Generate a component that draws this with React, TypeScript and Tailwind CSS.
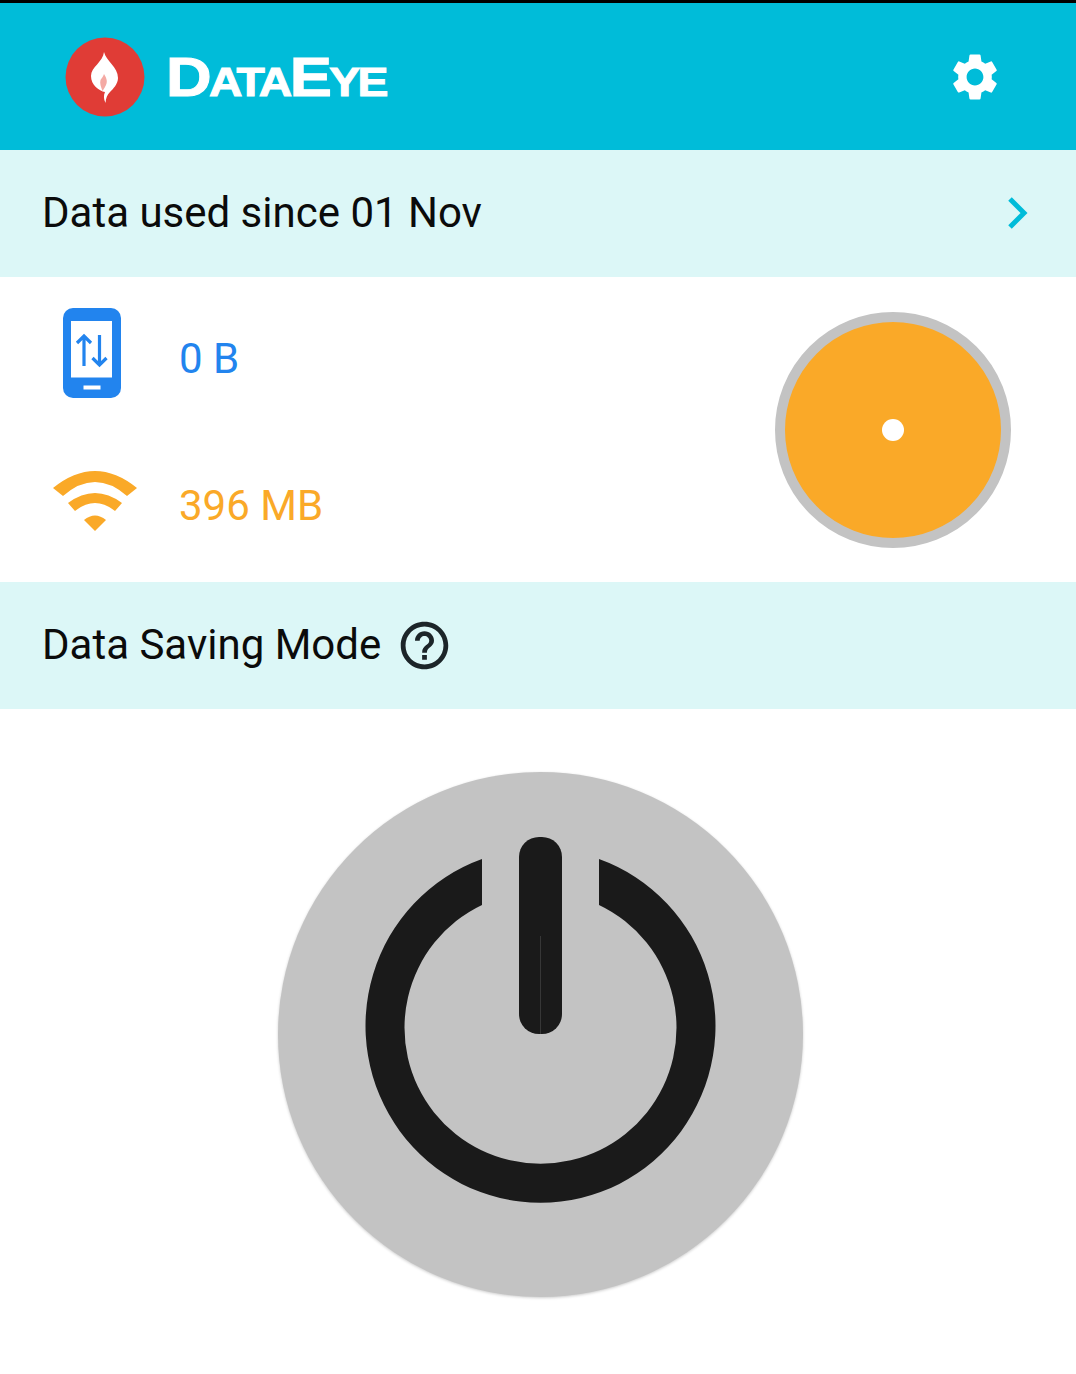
import { MdSettings, MdHelpOutline } from "react-icons/md";

function Flame() {
  return (
    <svg viewBox="0 0 80 80" className="h-[80px] w-[80px]">
      <circle cx="40" cy="40" r="39.5" fill="#e03c36" />
      <path
        d="M39 15 C41 24 53 30 53 41 C53 47 48 52 45 55 C42 58 41 61 40.500 66 C38.500 62 38.500 58 40 55 C34 54 26 48 26 39 C26 30 38 25 39 15 Z"
        fill="#ffffff"
      />
      <path d="M39 37 C41 40 43 44 41 48 C40 50 39 52 37.500 54 C36 50 34.500 46 35.500 43 C36.500 41 38 40 39 37 Z" fill="#f4aaa4" />
    </svg>
  );
}

function PhoneData() {
  return (
    <svg viewBox="0 0 58 90" className="h-[90px] w-[58px]">
      <rect x="0" y="0" width="58" height="90" rx="10" fill="#2284ee" />
      <rect x="8" y="13" width="41" height="56.500" fill="#ffffff" />
      <rect x="20.500" y="77.500" width="17" height="4" fill="#ffffff" />
      <path
        d="M21 58 V28 M14 35 L21 28 L28 35 M36.500 27 V57 M29.500 50 L36.500 57 L43.500 50"
        fill="none"
        stroke="#2284ee"
        strokeWidth="3.2"
      />
    </svg>
  );
}

function Wifi() {
  return (
    <svg viewBox="0 0 84 60" className="h-[60px] w-[84px]" fill="#faa928">
      <path d="M0 17 Q42 -17 84 17 L74 25 Q42 -3 10 25 Z" />
      <path d="M15 32 Q42 12 69 32 L62 40 Q42 24 22 40 Z" />
      <path d="M31 49 Q42 40 53 49 L42 60 Z" />
    </svg>
  );
}

function PowerGlyph() {
  return (
    <svg viewBox="0 0 351 366" className="h-[366px] w-[351px]">
      {/* ring ends are cut vertically, so this is a filled shape and not a stroke */}
      <path
        d="M117 22 A175 177 0 1 0 234 22 V68 A136 136 0 1 1 117 68 Z"
        fill="#1a1a1a"
      />
      <rect x="154" y="0" width="43" height="197" rx="20" fill="#1a1a1a" />
      <line x1="175.500" y1="99" x2="175.500" y2="197" stroke="#555555" strokeWidth="0.5" />
    </svg>
  );
}

export default function App() {
  return (
    <div
      className="flex h-[1374px] w-[1076px] flex-col overflow-hidden bg-white"
      style={{ fontFamily: "Roboto, sans-serif" }}
    >
      <div className="h-[3px] bg-black" />

      <header className="flex h-[147px] items-center justify-between bg-[#00bcd9] pl-[65px] pr-[73px]">
        <div className="flex items-center gap-[21px]">
          <Flame />
          <div
            className="flex origin-left scale-x-[1.13] items-baseline font-bold leading-none tracking-[-2.3px] text-white [-webkit-text-stroke:1px_white]"
            style={{ fontFamily: "'Liberation Sans', sans-serif" }}
          >
            <span className="text-[56px]">D</span>
            <span className="text-[41px]">ATA</span>
            <span className="text-[56px]">E</span>
            <span className="text-[41px]">YE</span>
          </div>
        </div>
        <MdSettings className="text-white" size={56} />
      </header>

      <section className="flex h-[127px] items-center justify-between bg-[#dcf7f7] pb-[1px] pl-[42px] pr-[48px]">
        <span className="mb-[1px] text-[42px] leading-none text-[#0b0b0b]">Data used since 01 Nov</span>
        <svg viewBox="0 0 20 32" className="h-[32px] w-[20px]">
          <path d="M2 2 L16 16 L2 30" fill="none" stroke="#00bcd9" strokeWidth="5" />
        </svg>
      </section>

      <section className="flex h-[305px] justify-between pl-[53px] pr-[65px] pt-[31px]">
        <div className="flex flex-col">
          <div className="flex h-[90px] items-center">
            <div className="w-[84px] pl-[10px]">
              <PhoneData />
            </div>
            <span className="ml-[42px] mt-[12px] text-[42px] leading-none text-[#2284ee]">0 B</span>
          </div>
          <div className="mt-[73px] flex h-[60px] items-center">
            <Wifi />
            <span className="ml-[42px] mt-[10px] text-[42px] leading-none text-[#faa928]">396 MB</span>
          </div>
        </div>
        <div className="mt-[4px] flex h-[236px] w-[236px] items-center justify-center rounded-full border-[10px] border-[#c3c3c3] bg-[#faa928]">
          <div className="h-[22px] w-[22px] rounded-full bg-white" />
        </div>
      </section>

      <section className="flex h-[127px] items-center bg-[#dcf7f7] pl-[42px]">
        <span className="mb-[2px] text-[42px] leading-none text-[#0b0b0b]">Data Saving Mode</span>
        <MdHelpOutline className="ml-[15px] text-[#1c2529]" size={57} />
      </section>

      <main className="flex justify-center pl-[4px] pt-[63px]">
        <div className="flex h-[525px] w-[525px] justify-center rounded-full bg-[#c3c3c3] pt-[65px] shadow-[0_1px_3px_rgba(0,0,0,0.2)]">
          <PowerGlyph />
        </div>
      </main>
    </div>
  );
}
